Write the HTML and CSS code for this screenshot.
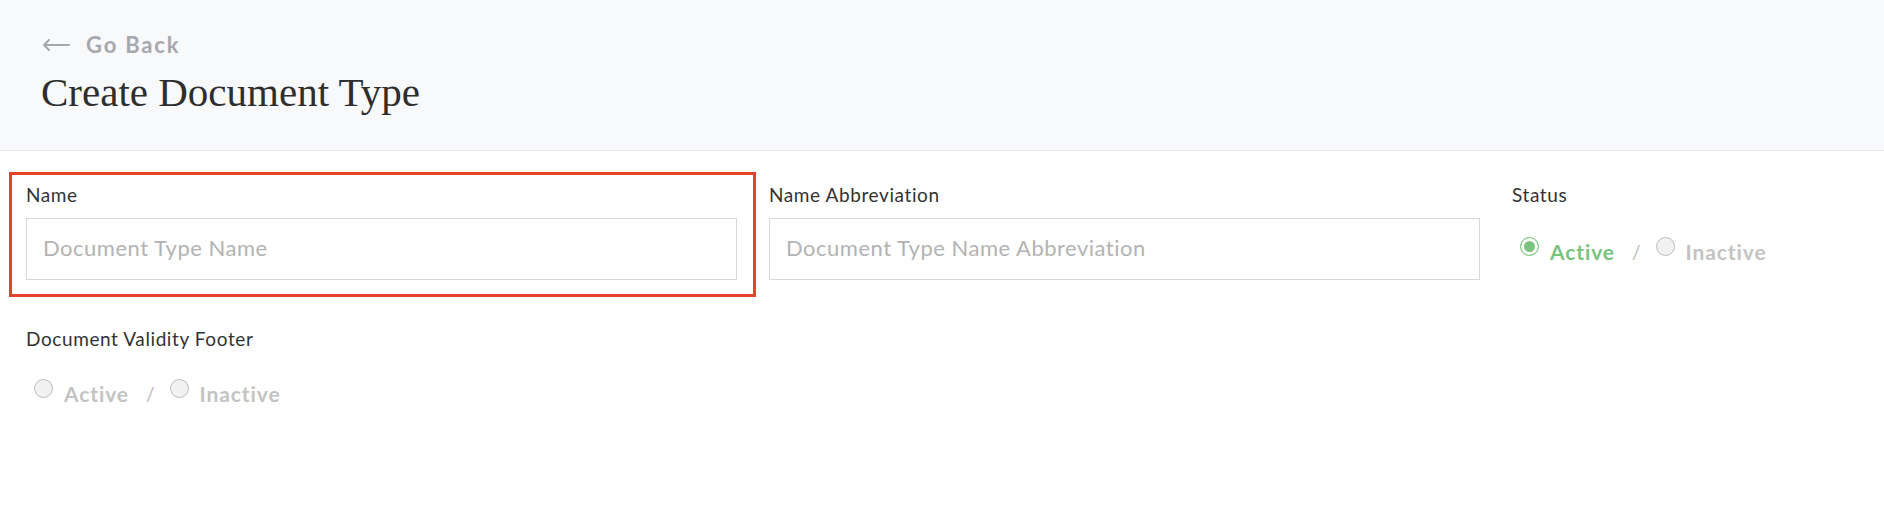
FILE: index.html
```html
<!DOCTYPE html>
<html lang="en">
<head>
  <meta charset="UTF-8">
  <title>Create Document Type</title>
  <link rel="stylesheet" href="styles.css">
</head>
<body>
  <div class="header">
    <a class="back" href="#">
      <svg class="back-arrow" width="28" height="14" viewBox="0 0 28 14">
        <path d="M27 7H2M7 2L2 7l5 5" fill="none" stroke="#a7a7ae" stroke-width="2" stroke-linecap="round" stroke-linejoin="round"/>
      </svg>
      Go Back
    </a>
    <h1 class="title">Create Document Type</h1>
  </div>

  <div class="form">
    <div class="form-row">
      <div class="field field-name">
        <label class="label">Name</label>
        <input class="input" type="text" placeholder="Document Type Name">
      </div>
      <div class="field field-abbr">
        <label class="label">Name Abbreviation</label>
        <input class="input" type="text" placeholder="Document Type Name Abbreviation">
      </div>
      <div class="field field-status">
        <label class="label">Status</label>
        <div class="radios">
          <span class="radio checked"></span>
          <span class="radio-text active">Active</span>
          <span class="slash">/</span>
          <span class="radio"></span>
          <span class="radio-text">Inactive</span>
        </div>
      </div>
    </div>

    <div class="field field-footer">
      <label class="label">Document Validity Footer</label>
      <div class="radios">
        <span class="radio"></span>
        <span class="radio-text">Active</span>
        <span class="slash">/</span>
        <span class="radio"></span>
        <span class="radio-text">Inactive</span>
      </div>
    </div>
  </div>
</body>
</html>
```

FILE: styles.css
```css
html {
  box-sizing: border-box;
}

*, *:before, *:after {
  box-sizing: inherit;
}

body {
  margin: 0;
  font-family: Lato, "Open Sans", sans-serif;
  color: #333;
  background: #fff;
}

.header {
  height: 151px;
  background: #f8f9fb;
  border-bottom: 1px solid #e6e6ec;
  padding: 31px 41px 0;
}

.back {
  display: flex;
  align-items: center;
  height: 26px;
  font-size: 22px;
  font-weight: 700;
  letter-spacing: 1.8px;
  color: #a7a7ae;
  text-decoration: none;
}

.back-arrow {
  margin: 2px 16px 0 1px;
}

.title {
  margin: 11px 0 0;
  font-family: "Liberation Serif", serif;
  font-weight: 400;
  font-size: 41px;
  line-height: 48px;
  color: #2e2e2e;
}

.form-row {
  display: flex;
  align-items: flex-start;
  padding: 21px 0 0 9px;
}

.field {
  width: 711px;
  padding-top: 12px;
}

.field-name {
  width: 747px;
  border: 3px solid #e5432d;
  padding: 9px 16px 14px 14px;
}

.field-abbr {
  margin-left: 13px;
}

.field-status {
  width: auto;
  margin-left: 32px;
}

.label {
  display: block;
  font-size: 19px;
  line-height: 22px;
  letter-spacing: 0.6px;
  margin-bottom: 12px;
  color: #333;
}

.input {
  display: block;
  width: 100%;
  height: 62px;
  border: 1px solid #d8d8d8;
  padding: 0 16px 3px;
  font-family: inherit;
  font-size: 22px;
  letter-spacing: 0.5px;
  color: #333;
  outline: none;
}

.input::placeholder {
  color: #b3b3b3;
}

.radios {
  display: flex;
  align-items: center;
  margin-top: 31px;
  padding-left: 8px;
  height: 28px;
}

.radio {
  width: 19px;
  height: 19px;
  border-radius: 50%;
  border: 1px solid #bdbdbd;
  background: #f1f1f1;
  margin-bottom: 9px;
}

.radio.checked {
  border-color: #7bc47e;
  background: #7bc47e;
  box-shadow: inset 0 0 0 3px #fff;
}

.radio-text {
  margin-left: 11px;
  font-size: 21px;
  font-weight: 700;
  letter-spacing: 0.9px;
  color: #c3c3c3;
}

.radio-text.active {
  color: #79c37c;
}

.slash {
  margin: 0 15px 0 17px;
  font-size: 19px;
  color: #b9b9b9;
}

.field-footer {
  width: auto;
  margin: 19px 0 0 26px;
}

.field-footer .radios {
  margin-top: 29px;
  padding-left: 8px;
}
```
